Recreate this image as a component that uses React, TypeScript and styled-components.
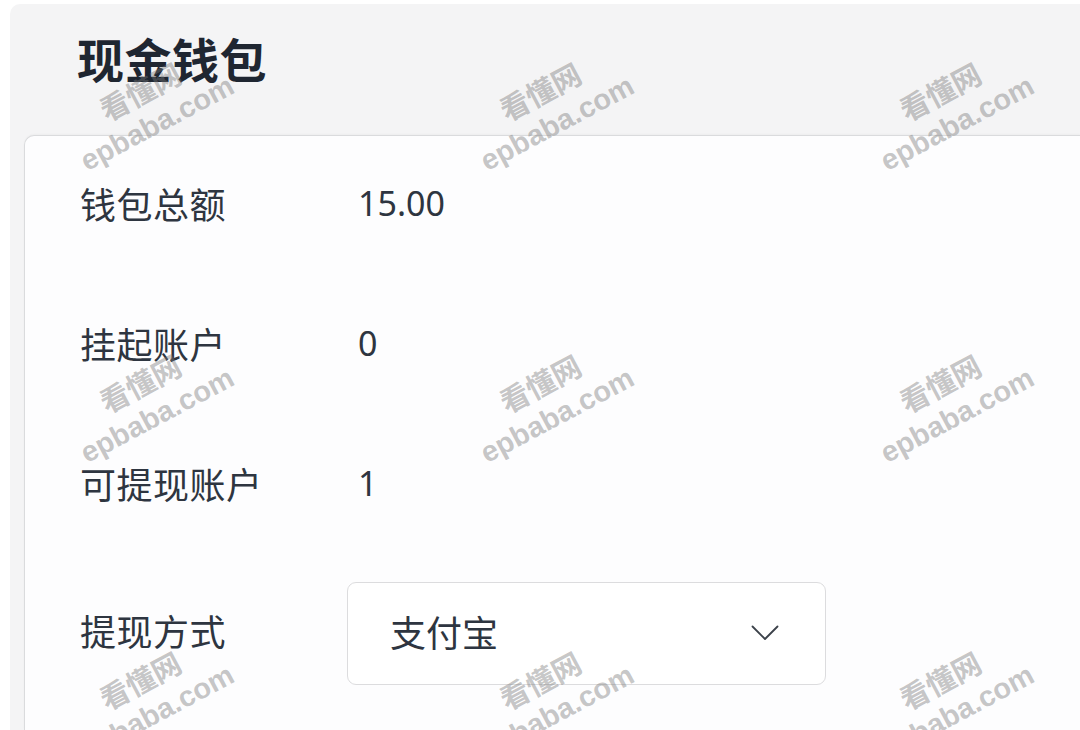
import React from "react";
import styled, { createGlobalStyle } from "styled-components";

// ── Global ───────────────────────────────────────────────────────

const GlobalStyle = createGlobalStyle`
  html, body {
    margin: 0;
    padding: 0;
    background: #ffffff;
  }
  body {
    font-family: "Noto Sans", "Noto Sans CJK SC", sans-serif;
  }
`;

// ── Styled ───────────────────────────────────────────────────────

const Screen = styled.div`
  position: relative;
  width: 1080px;
  height: 730px;
  overflow: hidden;
  padding: 4px 0 0 10px;
  box-sizing: border-box;
`;

const Panel = styled.div`
  height: 100%;
  background: #f4f4f5;
  border-radius: 10px 0 0 0;
  padding-left: 14px;
  display: flex;
  flex-direction: column;
`;

const Header = styled.div`
  height: 131px;
  box-sizing: border-box;
  padding: 25px 0 0 53px;
`;

const Title = styled.h1`
  margin: 0;
  font-family: "Noto Sans CJK SC", sans-serif;
  font-size: 47px;
  line-height: 58px;
  font-weight: 700;
  color: #1f2631;
  letter-spacing: 0.5px;
`;

const Card = styled.div`
  flex: 1;
  background: #fdfdfe;
  border: 1px solid #dadbdd;
  border-right: none;
  border-bottom: none;
  border-radius: 10px 0 0 0;
  box-shadow: 0 -1px 2px rgba(0, 0, 0, 0.03);
  padding-left: 55px;
`;

const Label = styled.span`
  font-family: "Noto Sans CJK SC", sans-serif;
  font-size: 36px;
  font-weight: 400;
  color: #2e3540;
  letter-spacing: 0.5px;
`;

const Row = styled.div<{ $select?: boolean }>`
  display: grid;
  grid-template-columns: 278px 1fr;
  align-items: center;
  box-sizing: border-box;
  height: ${({ $select }) => ($select ? 129 : 140)}px;
  padding: ${({ $select }) => ($select ? "26px 0 0" : "0 0 6px")};

  & > ${Label} {
    margin-bottom: ${({ $select }) => ($select ? 8 : 0)}px;
  }
`;

const Value = styled.span`
  font-family: "Noto Sans", "Noto Sans CJK SC", sans-serif;
  font-size: 34px;
  font-weight: 400;
  color: #2e3540;
`;

const Select = styled.div`
  margin-left: -11px;
  width: 479px;
  height: 103px;
  box-sizing: border-box;
  border: 1px solid #dcdcde;
  border-radius: 9px;
  background: #ffffff;
  display: flex;
  align-items: center;
  justify-content: space-between;
  padding: 0 46px 6px 42px;
`;

const SelectText = styled.span`
  font-family: "Noto Sans CJK SC", sans-serif;
  font-size: 36px;
  color: #2e3540;
`;

const Chevron = styled.svg`
  display: block;
  width: 28px;
  height: 16px;
  margin-top: 4px;
  color: #3c424a;
`;

const Watermark = styled.div`
  position: absolute;
  transform: translate(-50%, -50%) rotate(-28deg);
  text-align: center;
  font-family: "Liberation Sans", "Noto Sans CJK SC", sans-serif;
  font-weight: 700;
  font-size: 29px;
  line-height: 34px;
  color: rgba(120, 120, 120, 0.42);
  white-space: nowrap;
  pointer-events: none;
`;

// ── Data ─────────────────────────────────────────────────────────

const ROWS = [
  { label: "钱包总额", value: "15.00" },
  { label: "挂起账户", value: "0" },
  { label: "可提现账户", value: "1" },
];

const MARK_X = [149, 549, 949];
const MARK_Y = [108, 400, 697];

// ── Component ────────────────────────────────────────────────────

export default function App() {
  return (
    <>
      <GlobalStyle />
      <Screen>
        <Panel>
          <Header>
            <Title>现金钱包</Title>
          </Header>
          <Card>
            {ROWS.map((row) => (
              <Row key={row.label}>
                <Label>{row.label}</Label>
                <Value>{row.value}</Value>
              </Row>
            ))}
            <Row $select>
              <Label>提现方式</Label>
              <Select>
                <SelectText>支付宝</SelectText>
                <Chevron viewBox="0 0 28 16" fill="none">
                  <polyline
                    points="1.5,1.5 14,14 26.5,1.5"
                    stroke="currentColor"
                    strokeWidth="1.8"
                    strokeLinecap="round"
                    strokeLinejoin="round"
                  />
                </Chevron>
              </Select>
            </Row>
          </Card>
        </Panel>

        {MARK_Y.map((y) =>
          MARK_X.map((x) => (
            <Watermark key={`${x}-${y}`} style={{ left: x, top: y }}>
              看懂网
              <br />
              epbaba.com
            </Watermark>
          ))
        )}
      </Screen>
    </>
  );
}
